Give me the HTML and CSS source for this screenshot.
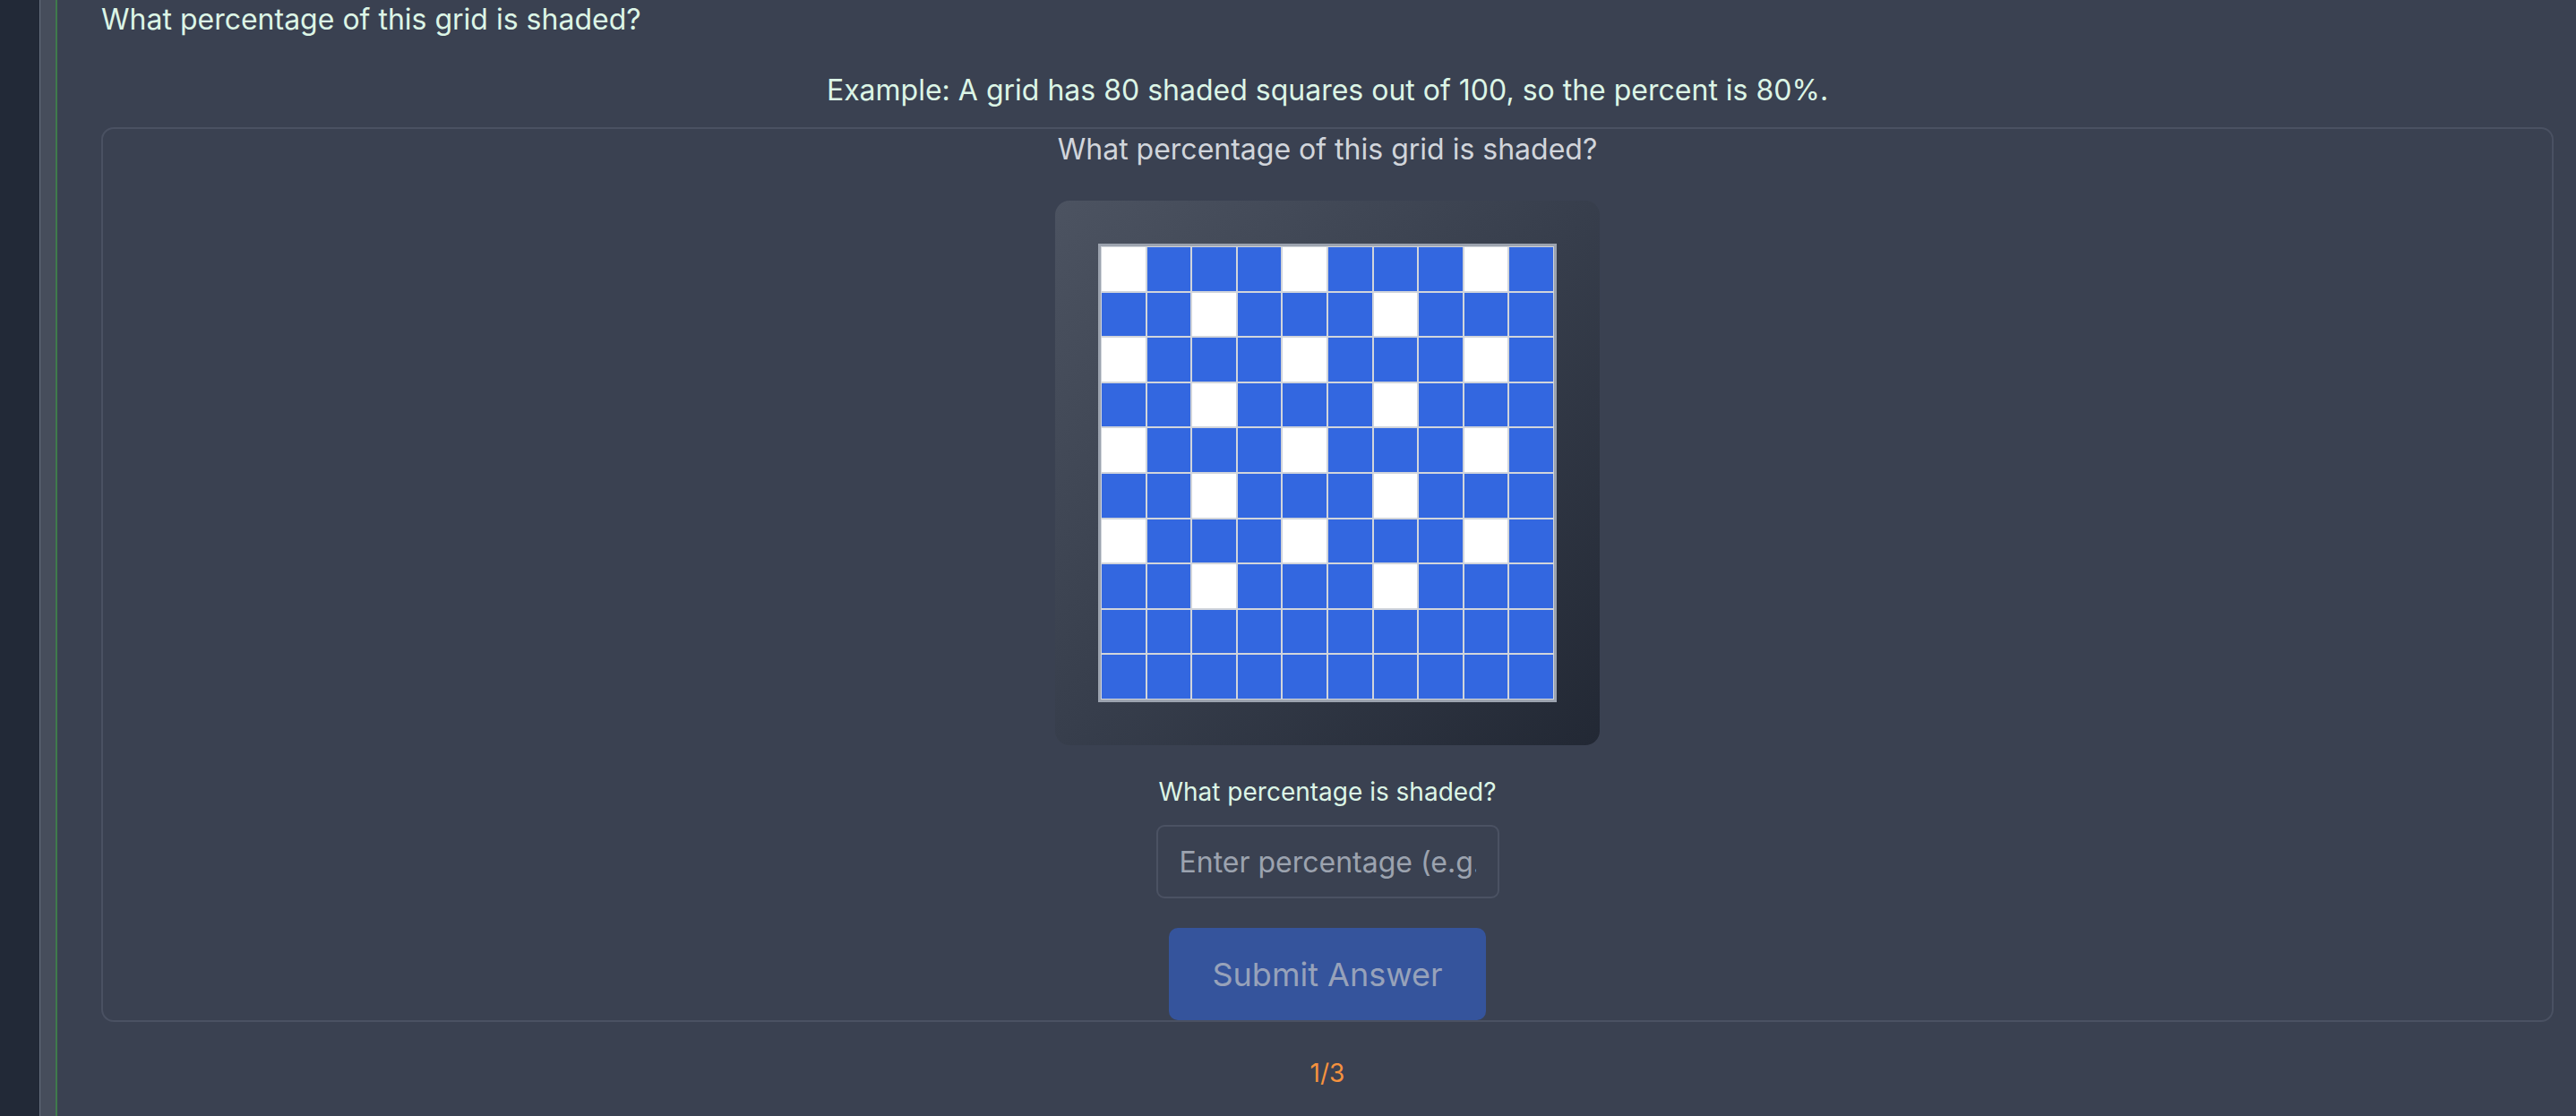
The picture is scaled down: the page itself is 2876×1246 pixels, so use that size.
FILE: index.html
```html
<!DOCTYPE html>
<html lang="en">
<head>
<meta charset="utf-8">
<title>Percentage grid</title>
<link rel="stylesheet" href="styles.css">
</head>
<body>
<div class="shell">
  <aside class="rail"></aside>
  <div class="gutter"></div>
  <main class="main">
    <h1 class="title">What percentage of this grid is shaded?</h1>
    <p class="example">Example: A grid has 80 shaded squares out of 100, so the percent is 80%.</p>
    <section class="card">
      <h2 class="card-heading">What percentage of this grid is shaded?</h2>
      <div class="panel">
        <div class="grid" id="grid">
          <div class="cell white"></div><div class="cell"></div><div class="cell"></div><div class="cell"></div><div class="cell white"></div><div class="cell"></div><div class="cell"></div><div class="cell"></div><div class="cell white"></div><div class="cell"></div>
          <div class="cell"></div><div class="cell"></div><div class="cell white"></div><div class="cell"></div><div class="cell"></div><div class="cell"></div><div class="cell white"></div><div class="cell"></div><div class="cell"></div><div class="cell"></div>
          <div class="cell white"></div><div class="cell"></div><div class="cell"></div><div class="cell"></div><div class="cell white"></div><div class="cell"></div><div class="cell"></div><div class="cell"></div><div class="cell white"></div><div class="cell"></div>
          <div class="cell"></div><div class="cell"></div><div class="cell white"></div><div class="cell"></div><div class="cell"></div><div class="cell"></div><div class="cell white"></div><div class="cell"></div><div class="cell"></div><div class="cell"></div>
          <div class="cell white"></div><div class="cell"></div><div class="cell"></div><div class="cell"></div><div class="cell white"></div><div class="cell"></div><div class="cell"></div><div class="cell"></div><div class="cell white"></div><div class="cell"></div>
          <div class="cell"></div><div class="cell"></div><div class="cell white"></div><div class="cell"></div><div class="cell"></div><div class="cell"></div><div class="cell white"></div><div class="cell"></div><div class="cell"></div><div class="cell"></div>
          <div class="cell white"></div><div class="cell"></div><div class="cell"></div><div class="cell"></div><div class="cell white"></div><div class="cell"></div><div class="cell"></div><div class="cell"></div><div class="cell white"></div><div class="cell"></div>
          <div class="cell"></div><div class="cell"></div><div class="cell white"></div><div class="cell"></div><div class="cell"></div><div class="cell"></div><div class="cell white"></div><div class="cell"></div><div class="cell"></div><div class="cell"></div>
          <div class="cell"></div><div class="cell"></div><div class="cell"></div><div class="cell"></div><div class="cell"></div><div class="cell"></div><div class="cell"></div><div class="cell"></div><div class="cell"></div><div class="cell"></div>
          <div class="cell"></div><div class="cell"></div><div class="cell"></div><div class="cell"></div><div class="cell"></div><div class="cell"></div><div class="cell"></div><div class="cell"></div><div class="cell"></div><div class="cell"></div>
        </div>
      </div>
      <label class="answer-label" for="answer">What percentage is shaded?</label>
      <input class="answer-input" id="answer" type="text" placeholder="Enter percentage (e.g. 80)">
      <button class="submit" type="button" disabled>Submit Answer</button>
    </section>
    <div class="progress">1/3</div>
  </main>
</div>
</body>
</html>
```

FILE: styles.css
```css
* { box-sizing: border-box; }

html, body {
  margin: 0;
  padding: 0;
  height: 100%;
}

body {
  background: #3a4151;
  font-family: Inter, "Noto Sans", "Liberation Sans", sans-serif;
  overflow: hidden;
}

.shell {
  display: flex;
  min-height: 100vh;
}

.rail {
  width: 45px;
  flex: none;
  background: #222937;
  border-right: 1px solid #697180;
}

.gutter {
  width: 19px;
  flex: none;
  background: #464d5b;
  border-right: 2px solid #3f7a4b;
}

.main {
  flex: 1;
  padding: 0 25px 0 49px;
  display: flex;
  flex-direction: column;
}

.title {
  margin: 0;
  font-size: 32px;
  line-height: 44px;
  font-weight: 400;
  color: #dcf5e6;
}

.example {
  margin: 35px 0 0;
  font-size: 32px;
  line-height: 44px;
  text-align: center;
  color: #dcf5e6;
}

.card {
  margin-top: 19px;
  border: 2px solid #4a5162;
  border-radius: 14px;
  padding: 1px 0 0;
  display: flex;
  flex-direction: column;
  align-items: center;
  height: 999px;
}

.card-heading {
  margin: 0;
  font-size: 32px;
  line-height: 44px;
  font-weight: 400;
  color: #d1d5db;
}

.panel {
  margin-top: 35px;
  width: 608px;
  height: 608px;
  padding: 48px;
  border-radius: 16px;
  background: linear-gradient(135deg, #4c5361 0%, #373e4c 50%, #222834 100%);
}

.grid {
  width: 512px;
  height: 512px;
  border: 3px solid #9ca3af;
  background: #d1d5db;
  display: grid;
  grid-template-columns: repeat(10, 1fr);
  grid-template-rows: repeat(10, 1fr);
}

.cell {
  background: #3367e0;
  border: 1px solid #d1d5db;
}

.cell.white {
  background: #ffffff;
}

.answer-label {
  margin-top: 32px;
  font-size: 28px;
  line-height: 40px;
  color: #dcf5e6;
}

.answer-input {
  margin-top: 17px;
  width: 383px;
  height: 82px;
  border: 2px solid #4b5263;
  border-radius: 9px;
  background: transparent;
  padding: 0 24px;
  font-family: Inter, "Noto Sans", "Liberation Sans", sans-serif;
  font-size: 32px;
  color: #e5e7eb;
}

.answer-input::placeholder {
  color: #9ca3af;
}

.submit {
  margin-top: 33px;
  width: 354px;
  height: 103px;
  border: none;
  border-radius: 10px;
  background: #35549c;
  color: #97a2ba;
  font-family: Inter, "Noto Sans", "Liberation Sans", sans-serif;
  font-size: 36px;
}

.progress {
  margin-top: 38px;
  text-align: center;
  font-size: 28px;
  line-height: 39px;
  color: #f5923e;
}
```
